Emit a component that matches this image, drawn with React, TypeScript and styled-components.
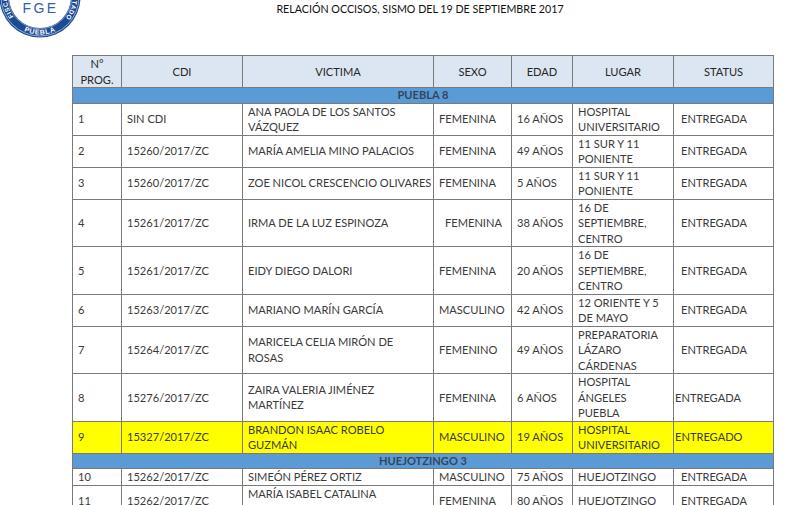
import React from "react";
import styled, { createGlobalStyle } from "styled-components";

const Global = createGlobalStyle`
  html, body { margin: 0; padding: 0; background: #ffffff; }
  body { width: 800px; height: 505px; overflow: hidden; font-family: Lato, "Open Sans", sans-serif; }
`;

const Page = styled.div`
  width: 800px;
  height: 505px;
  overflow: hidden;
  display: flex;
  flex-direction: column;
`;

const Header = styled.header`
  height: 55px;
  flex-shrink: 0;
  display: grid;
  grid-template-columns: 84px 1fr 84px;
  align-items: start;
`;

const Title = styled.h1`
  margin: 0;
  padding: 2px 0 0 40px;
  text-align: center;
  font-size: 10.7px;
  font-weight: 400;
  color: #111;
  line-height: 14px;
`;

const TableWrap = styled.div`
  flex-shrink: 0;
  padding-left: 72px;
`;

const Table = styled.table`
  width: 701px;
  border-collapse: collapse;
  table-layout: fixed;
  font-size: 11.1px;
  color: #3a3a3a;
`;

const HeadCell = styled.th`
  background: #dce6f2;
  border: 1px solid #7a7a7a;
  font-weight: 400;
  color: #262626;
  text-align: center;
  line-height: 15.5px;
  padding: 0 4px;
  height: 31px;
`;

const Band = styled.td`
  background: #5b9bd5;
  border: 1px solid #7a7a7a;
  text-align: center;
  font-weight: 700;
  color: #33455e;
  line-height: 14.5px;
  padding: 0;
`;

const Row = styled.tr<{ $hl?: boolean }>`
  background: ${(p) => (p.$hl ? "#ffff00" : "#ffffff")};
`;

const Cell = styled.td<{ $pad?: number }>`
  border: 1px solid #7a7a7a;
  line-height: 15.5px;
  padding: 0 0 0 ${(p) => (p.$pad ?? 5)}px;
  vertical-align: middle;
  text-align: left;
  white-space: pre;
`;

type Rec = {
  n: string;
  cdi: string;
  v: string;
  s: string;
  e: string;
  l: string;
  st: string;
  hl?: boolean;
  sPad?: number;
  stPad?: number;
};

const puebla: Rec[] = [
  { n: "1", cdi: "SIN CDI", v: "ANA PAOLA DE LOS SANTOS\nVÁZQUEZ", s: "FEMENINA", e: "16 AÑOS", l: "HOSPITAL\nUNIVERSITARIO", st: "ENTREGADA" },
  { n: "2", cdi: "15260/2017/ZC", v: "MARÍA AMELIA MINO PALACIOS", s: "FEMENINA", e: "49 AÑOS", l: "11 SUR Y 11\nPONIENTE", st: "ENTREGADA" },
  { n: "3", cdi: "15260/2017/ZC", v: "ZOE NICOL CRESCENCIO OLIVARES", s: "FEMENINA", e: "5 AÑOS", l: "11 SUR Y 11\nPONIENTE", st: "ENTREGADA" },
  { n: "4", cdi: "15261/2017/ZC", v: "IRMA DE LA LUZ ESPINOZA", s: "FEMENINA", e: "38 AÑOS", l: "16 DE\nSEPTIEMBRE,\nCENTRO", st: "ENTREGADA", sPad: 11 },
  { n: "5", cdi: "15261/2017/ZC", v: "EIDY DIEGO DALORI", s: "FEMENINA", e: "20 AÑOS", l: "16 DE\nSEPTIEMBRE,\nCENTRO", st: "ENTREGADA" },
  { n: "6", cdi: "15263/2017/ZC", v: "MARIANO MARÍN GARCÍA", s: "MASCULINO", e: "42 AÑOS", l: "12 ORIENTE Y 5\nDE MAYO", st: "ENTREGADA" },
  { n: "7", cdi: "15264/2017/ZC", v: "MARICELA CELIA MIRÓN DE\nROSAS", s: "FEMENINO", e: "49 AÑOS", l: "PREPARATORIA\nLÁZARO\nCÁRDENAS", st: "ENTREGADA" },
  { n: "8", cdi: "15276/2017/ZC", v: "ZAIRA VALERIA JIMÉNEZ\nMARTÍNEZ", s: "FEMENINA", e: "6 AÑOS", l: "HOSPITAL\nÁNGELES\nPUEBLA", st: "ENTREGADA", stPad: 1 },
  { n: "9", cdi: "15327/2017/ZC", v: "BRANDON ISAAC ROBELO\nGUZMÁN", s: "MASCULINO", e: "19 AÑOS", l: "HOSPITAL\nUNIVERSITARIO", st: "ENTREGADO", hl: true, stPad: 1 },
];

const huejo: Rec[] = [
  { n: "10", cdi: "15262/2017/ZC", v: "SIMEÓN PÉREZ ORTIZ", s: "MASCULINO", e: "75 AÑOS", l: "HUEJOTZINGO", st: "ENTREGADA" },
  { n: "11", cdi: "15262/2017/ZC", v: "MARÍA ISABEL CATALINA\nMACEDO ROSALES", s: "FEMENINA", e: "80 AÑOS", l: "HUEJOTZINGO", st: "ENTREGADA" },
];

const widths = [49, 121, 191, 78, 61, 101, 100];

const LogoSvg = styled.svg`
  display: block;
`;

function Logo() {
  return (
    <LogoSvg width="84" height="42" viewBox="0 0 84 42">
      <defs>
        <path id="arcBottom" d="M 7.5 15.75 A 37.5 37.5 0 0 0 72.5 15.75" />
        <path id="arcLeft" d="M 14.7 18.2 A 33.5 33.5 0 0 1 20 -30" />
        <path id="arcRight" d="M 51.3 -34 A 33.5 33.5 0 0 1 65.3 18.2" />
      </defs>
      <circle cx="40" cy="-3" r="40.5" fill="#1c4a94" />
      <circle cx="40" cy="-3" r="39" fill="none" stroke="#c9d4e8" strokeWidth="0.7" />
      <circle cx="40" cy="-3" r="31" fill="#ffffff" />
      <circle cx="40" cy="-3" r="31.8" fill="none" stroke="#8ea3cc" strokeWidth="0.8" />
      <text x="40.5" y="13.2" textAnchor="middle" fontFamily="'Liberation Sans', sans-serif" fontSize="14" fontWeight="400" fill="#2f62b0" letterSpacing="2.4">FGE</text>
      <text fontFamily="'Liberation Sans', sans-serif" fontSize="7" fontWeight="700" fill="#ffffff" letterSpacing="0.7">
        <textPath href="#arcBottom" startOffset="50%" textAnchor="middle">PUEBLA</textPath>
      </text>
      <text fontFamily="'Liberation Sans', sans-serif" fontSize="6.5" fontWeight="700" fill="#ffffff" letterSpacing="0.4">
        <textPath href="#arcLeft" startOffset="2">FISCALÍA</textPath>
      </text>
      <text fontFamily="'Liberation Sans', sans-serif" fontSize="6.5" fontWeight="700" fill="#ffffff" letterSpacing="0.4">
        <textPath href="#arcRight" startOffset="100%" textAnchor="end">ESTADO</textPath>
      </text>
    </LogoSvg>
  );
}

function DataRow({ r }: { r: Rec }) {
  return (
    <Row $hl={r.hl}>
      <Cell>{r.n}</Cell>
      <Cell>{r.cdi}</Cell>
      <Cell>{r.v}</Cell>
      <Cell $pad={r.sPad}>{r.s}</Cell>
      <Cell>{r.e}</Cell>
      <Cell>{r.l}</Cell>
      <Cell $pad={r.stPad ?? 7}>{r.st}</Cell>
    </Row>
  );
}

export default function App() {
  return (
    <Page>
      <Global />
      <Header>
        <Logo />
        <Title>RELACIÓN OCCISOS, SISMO DEL 19 DE SEPTIEMBRE 2017</Title>
        <div />
      </Header>
      <TableWrap>
        <Table>
          <colgroup>
            {widths.map((w, i) => (
              <col key={i} style={{ width: w }} />
            ))}
          </colgroup>
          <thead>
            <tr>
              <HeadCell>N°<br />PROG.</HeadCell>
              <HeadCell>CDI</HeadCell>
              <HeadCell>VICTIMA</HeadCell>
              <HeadCell>SEXO</HeadCell>
              <HeadCell>EDAD</HeadCell>
              <HeadCell>LUGAR</HeadCell>
              <HeadCell>STATUS</HeadCell>
            </tr>
          </thead>
          <tbody>
            <tr>
              <Band colSpan={7}>PUEBLA 8</Band>
            </tr>
            {puebla.map((r) => (
              <DataRow key={r.n} r={r} />
            ))}
            <tr>
              <Band colSpan={7}>HUEJOTZINGO 3</Band>
            </tr>
            {huejo.map((r) => (
              <DataRow key={r.n} r={r} />
            ))}
          </tbody>
        </Table>
      </TableWrap>
    </Page>
  );
}
